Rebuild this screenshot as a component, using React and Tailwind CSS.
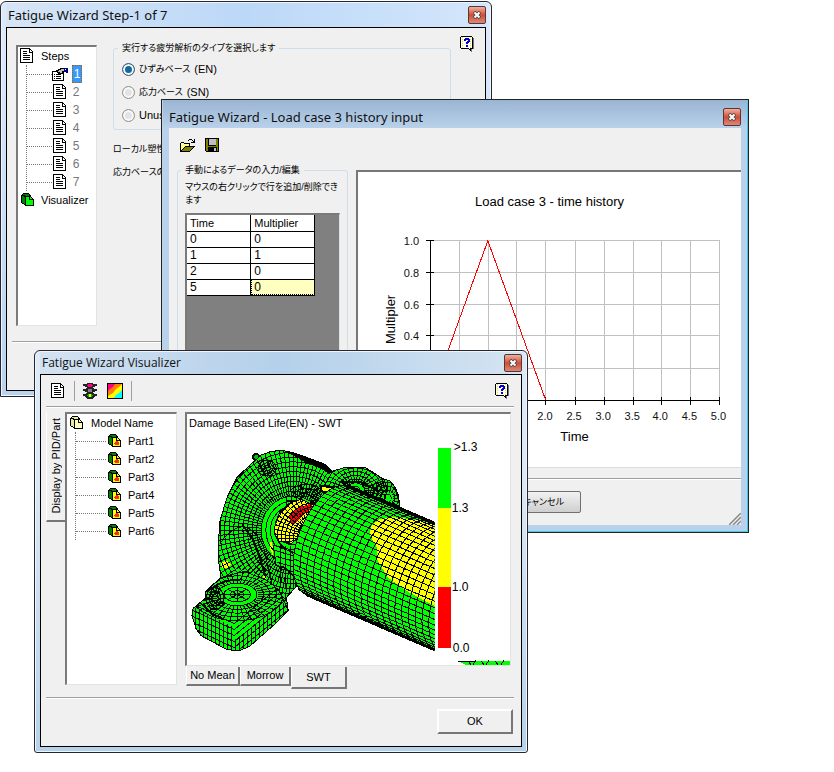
import { useState } from "react";

const UI_FONT = "font-['Liberation_Sans','Noto_Sans_CJK_JP',sans-serif]";
const JP_TEXT =
  "font-['Liberation_Sans','Noto_Sans_CJK_JP',sans-serif] text-[9px] [font-feature-settings:'palt']";

/* ---------- icons ---------- */

function DocIcon() {
  return (
    <svg width="15" height="16" viewBox="0 0 15 16" shapeRendering="crispEdges" className="shrink-0">
      <path d="M1 0h10v1h1v1h1v1h1v12H1z" fill="#000" />
      <path d="M2 1h8v4h3v9H2z" fill="#fff" />
      <path d="M11 2h1v1h1v1h-2z" fill="#fff" />
      <path d="M4 3h4v1H4zM4 5h4v1H4zM4 7h7v1H4zM4 9h7v1H4zM4 11h7v1H4z" fill="#000" />
    </svg>
  );
}

function EditIcon() {
  return (
    <svg width="16" height="16" viewBox="0 0 16 16" shapeRendering="crispEdges" className="shrink-0">
      <path d="M0 5h12v10H0z" fill="#000" />
      <path d="M1 6h10v8H1z" fill="#fff" />
      <path d="M2 8h1v1H2zM4 8h5v1H4zM2 10h1v1H2zM4 10h5v1H4zM2 12h1v1H2zM4 12h5v1H4z" fill="#000" />
      <path d="M4 4h2V3h2V2h5v4h-2v2H9v1H7V8H6V7H5V6H4z" fill="#000" />
      <path d="M5 5h2V4h2V3h4v2h-3v2H8V6H6z" fill="#c0c0c0" />
      <path d="M12 2h4v5h-2V6h-2z" fill="#000080" />
      <path d="M13 3h1v1h-1z" fill="#fff" />
    </svg>
  );
}

function BlockIcon({ side, face, spot }) {
  return (
    <svg width="14" height="14" viewBox="0 0 14 14" shapeRendering="crispEdges" className="shrink-0">
      <path d="M0 2h1V1h1V0h6v1h1v1h1v2h1v1h1v1h1v7H4v-1H3v-1H1v-1H0z" fill="#000" />
      <path d="M1 3h2v1h1v7H3v-1H1zM2 1h6v2H4V2H2z" fill={side} />
      <path d="M5 4h3v3h4v5H5zM9 4h1v1h1v1H9z" fill={face} />
      {spot && <path d="M6 9h1V8h1V7h2v1h1v3H7v-1H6z" fill={spot} />}
    </svg>
  );
}

function HelpIcon() {
  return (
    <svg width="15" height="16" viewBox="0 0 15 16" shapeRendering="crispEdges" className="shrink-0">
      <path d="M2 1h11v1h1v11h-2v3h-1v-1h-1v-1H9v-1H2z" fill="#777" />
      <path d="M1 0h11v1h1v12h-2v2h-1v-1H9v-1H1v-1H0V1h1z" fill="#000" />
      <path d="M1 1h11v11h-2v1H9v-1H1z" fill="#fff" />
      <path d="M2.500 1v11M10.500 1v11" stroke="#f5e800" strokeDasharray="1 1" />
      <path d="M5 2h4v1h1v3H9v1H8v1H6V6h1V5h1V4H6v1H4V3h1zM6 9h2v2H6z" fill="#0000d0" />
    </svg>
  );
}

function FolderIcon() {
  return (
    <svg width="17" height="15" viewBox="0 0 17 15" shapeRendering="crispEdges">
      <path d="M1 5h1V4h3v1h6v3h5v1h-1v1h-1v1h-1v1h-1v1h-1v1H1z" fill="#000" />
      <path d="M2 5h3v1h5v2H6v1H5v1H4v1H3v1H2z" fill="#ffff8c" />
      <path d="M6 9h8v1h-1v1h-1v1h-1v1H3v-1h1v-1h1v-1h1z" fill="#808000" />
      <path d="M9 2h1V1h3v1h1v1h1V1h1v4h-4V4h2V3h-1V2h-3v1H9z" fill="#000" />
    </svg>
  );
}

function DiskIcon() {
  return (
    <svg width="15" height="15" viewBox="0 0 15 15" shapeRendering="crispEdges">
      <path d="M0 0h14v14H1v-1H0z" fill="#000" />
      <path d="M1 1h2v7h8V1h2v12H1z" fill="#808000" />
      <path d="M4 1h7v6H4z" fill="#c0c0c0" />
      <path d="M3 9h9v4H3z" fill="#000" />
      <path d="M9 10h2v3H9z" fill="#c0c0c0" />
    </svg>
  );
}

function TrafficIcon() {
  return (
    <svg width="16" height="16" viewBox="0 0 16 16" shapeRendering="crispEdges">
      <path d="M5 0h6v1h1v3h-1v1h1v4h-1v1h1v5h-1v1H5v-1H4v-5h1V9H4V5h1V4H4V1h1z" fill="#222" />
      <path d="M1 1h3v2h1v1H3V3H1zM15 1h-3v2h-1v1h2V3h2zM1 6h3v2h1v1H3V8H1zM15 6h-3v2h-1v1h2V8h2zM1 11h3v2h1v1H3v-1H1zM15 11h-3v2h-1v1h2v-1h2z" fill="#222" />
      <path d="M6 1h4v1h1v1h-1v1H6V3H5V2h1z" fill="#ff0080" />
      <path d="M6 6h4v3H6z" fill="#808080" />
      <path d="M6 11h4v1h1v1h-1v1H6v-1H5v-1h1z" fill="#00c000" />
      <path d="M7 11h2v3H7z" fill="#ff0" />
    </svg>
  );
}

function ContourIcon() {
  return (
    <svg width="16" height="16" viewBox="0 0 16 16">
      <path d="M0 0h16v16H0z" fill="#000" />
      <path d="M1 1h14v14H1z" fill="#ff0" />
      <path d="M1 1h14L12 4 9 6 6 10 1 13z" fill="#ff8000" />
      <path d="M1 1h7L6 4 3 6 1 8z" fill="#ff0080" />
      <path d="M15 7v8H7l2-3 3-2z" fill="#0ff" />
    </svg>
  );
}

/* ---------- window parts ---------- */

function CloseButton() {
  return (
    <button
      type="button"
      aria-label="Close"
      className="flex h-[18px] w-[18px] shrink-0 items-center justify-center rounded-[2px] border border-[#5c3434] bg-linear-to-b from-[#eeb0a0] via-[#cf4b33] to-[#d88878]"
    >
      <svg width="8" height="8" viewBox="0 0 8 8">
        <path d="M1 1l6 6M7 1L1 7" stroke="#444" strokeWidth="3.500" />
        <path d="M1.500 1.500l5 5M6.500 1.500l-5 5" stroke="#fff" strokeWidth="2" />
      </svg>
    </button>
  );
}

function TitleBar({ title, className }) {
  return (
    <div className={`flex items-center justify-between ${className}`}>
      <h2 className="whitespace-nowrap text-[#111]">{title}</h2>
      <CloseButton />
    </div>
  );
}

function Rule({ className = "" }) {
  return <div className={`h-[2px] border-t border-[#a0a0a0] border-b border-b-white ${className}`} />;
}

const SUNKEN = "border-t-2 border-l-2 border-t-[#7a7a7a] border-l-[#7a7a7a] border-r border-b border-r-[#e3e3e3] border-b-[#e3e3e3]";

/* ---------- step window ---------- */

function StepTree({ current, setCurrent }) {
  return (
    <div className={`min-h-[281px] w-[81px] bg-white ${SUNKEN}`}>
      <div className="flex h-[18px] items-center gap-[7px] pl-px">
        <DocIcon />
        <span>Steps</span>
      </div>
      <ul className="ml-2 border-l border-dotted border-[#777]">
        {[1, 2, 3, 4, 5, 6, 7].map((n) => (
          <li key={n} className={`flex h-[18px] items-center ${n === 7 ? "-mb-2" : ""}`}>
            <span className="w-[25px] border-t border-dotted border-[#777]" />
            {n === 1 ? <EditIcon /> : <DocIcon />}
            <button
              type="button"
              onClick={() => setCurrent(n)}
              className={`ml-1 h-[18px] w-[10px] text-[12px] leading-4 ${
                n === current
                  ? "border border-dotted border-[#b06000] bg-[#3399ff] text-white"
                  : "text-[#777]"
              }`}
            >
              {n}
            </button>
          </li>
        ))}
      </ul>
      <div className="mt-2 flex h-[18px] items-center gap-[6px] pl-[3px]">
        <BlockIcon side="#008000" face="#00ff00" />
        <span>Visualizer</span>
      </div>
    </div>
  );
}

function StepWindow() {
  const [current, setCurrent] = useState(1);
  const [type, setType] = useState("en");
  const types = [
    { id: "en", label: "ひずみベース", suffix: "(EN)" },
    { id: "sn", label: "応力ベース", suffix: "(SN)" },
    { id: "un", label: "", suffix: "Unus" },
  ];

  return (
    <section className="absolute top-px left-0 w-[492px] rounded-t-md border border-[#26262e] bg-linear-to-b from-[#dbe9fb] from-10% to-[#b9d3ef] px-[5px] pt-px pb-[5px] shadow-[inset_0_0_0_1px_#eef5fc]">
      <TitleBar
        title="Fatigue Wizard Step-1 of 7"
        className="h-[24px] bg-linear-to-r from-[#d6e5f6] via-[#bcd8f8] to-[#d3e6fb] pl-[2px] font-['Noto_Sans',sans-serif] text-[13px]"
      />
      <div className="min-h-[364px] border border-black bg-[#f0f0f0]">
        <div className="flex pt-[17px] pl-[9px]">
          <StepTree current={current} setCurrent={setCurrent} />
          <div className="-mt-1 ml-4 w-[338px]">
            <fieldset className="min-w-0 rounded-[3px] border border-[#d0dde8] px-2 pb-1">
              <legend className={`-ml-1 px-1 leading-[14px] ${JP_TEXT}`}>
                実行する疲労解析のタイプを選択します
              </legend>
              <div className="flex flex-col gap-[9px] pt-[7px] pb-[3px]">
                {types.map((t) => (
                  <label key={t.id} className={`flex h-[14px] items-center gap-1 whitespace-nowrap ${JP_TEXT}`}>
                    <input
                      type="radio"
                      name="type"
                      checked={type === t.id}
                      onChange={() => setType(t.id)}
                      className="h-[13px] w-[13px] appearance-none rounded-full border border-[#8e8f8f] bg-[#e4e4e4] shadow-[inset_0_0_0_2px_#f8f8f8] checked:border-[#4a6078] checked:bg-[#14689c]"
                    />
                    {t.label && <span>{t.label}</span>}
                    <span className="text-[11px]">{t.suffix}</span>
                  </label>
                ))}
              </div>
            </fieldset>
            <div className={`flex flex-col gap-[9px] pt-[12px] leading-[14px] ${JP_TEXT}`}>
              <p>ローカル塑性</p>
              <p>応力ベースの</p>
            </div>
          </div>
          <button type="button" aria-label="Help" className="-mt-[9px] ml-[9px] h-4">
            <HelpIcon />
          </button>
        </div>
        <Rule className="mt-[15px] ml-[5px] mr-1" />
      </div>
    </section>
  );
}

/* ---------- history window ---------- */

function HistoryChart() {
  const xs = Array.from({ length: 11 }, (_, i) => Math.round(431 + i * 28.8) + 0.5);
  const ys = Array.from({ length: 6 }, (_, i) => Math.round(399 - i * 31.8) + 0.5);
  return (
    <svg viewBox="359 172 382 294" className="block w-full" fontFamily="Liberation Sans, Arial, sans-serif">
      <g stroke="#c0c0c0" shapeRendering="crispEdges">
        {xs.map((x) => <path key={x} d={`M${x} 240V399`} />)}
        {ys.map((y) => <path key={y} d={`M431 ${y}H719`} />)}
      </g>
      <path d="M431.500 240V400M431 399.500H720" stroke="#000" shapeRendering="crispEdges" />
      <g stroke="#000" shapeRendering="crispEdges">
        {xs.map((x) => <path key={x} d={`M${x} 396V404`} />)}
        {ys.map((y) => <path key={y} d={`M427 ${y}H435`} />)}
      </g>
      <path d="M431 399L488.500 240.500L546 399" fill="none" stroke="#f00" shapeRendering="crispEdges" />
      <g fontSize="11" fill="#111">
        {ys.map((y, i) => (
          <text key={y} x="420" y={y + 4} textAnchor="end">{(i * 0.2).toFixed(1)}</text>
        ))}
        {xs.map((x, i) => (
          <text key={x} x={x - 1} y="419" textAnchor="middle">{(i * 0.5).toFixed(1)}</text>
        ))}
      </g>
      <g fontSize="13" fill="#000" textAnchor="middle">
        <text x="550" y="206">Load case 3 - time history</text>
        <text x="575" y="440">Time</text>
        <text transform="translate(396 319) rotate(-90)">Multipler</text>
      </g>
    </svg>
  );
}

function HistoryWindow() {
  const rows = [
    [0, 0],
    [1, 1],
    [2, 0],
    [5, 0],
  ];
  return (
    <section className="absolute top-[99px] left-[161px] w-[588px] border border-[#222] bg-[#b9d1ea] px-[7px] pb-[7px] shadow-[inset_-1px_-1px_0_#44c8e8]">
      <TitleBar
        title="Fatigue Wizard - Load case 3 history input"
        className="-mx-[6px] h-[28px] bg-linear-to-b from-[#9ab5d3] to-[#b9d1ea] px-[6px] pt-[5px] font-['Noto_Sans',sans-serif] text-[13px]"
      />
      <div className="flex flex-col bg-[#f0f0f0]">
        <div className="flex h-[35px] items-center gap-[9px] pl-[10px]">
          <button type="button" aria-label="Open"><FolderIcon /></button>
          <button type="button" aria-label="Save"><DiskIcon /></button>
        </div>
        <div className="flex">
          <fieldset className="ml-2 w-[171px] min-w-0 shrink-0 rounded-[3px] border border-[#d0dde8] px-[7px]">
            <legend className={`-ml-1 px-1 leading-[14px] ${JP_TEXT}`}>手動によるデータの入力/編集</legend>
            <p className={`pt-1 whitespace-nowrap leading-[13px] ${JP_TEXT}`}>
              マウスの右クリックで行を追加/削除でき
              <br />
              ます
            </p>
            <div className={`mt-[6px] min-h-[240px] bg-[#808080] ${SUNKEN}`}>
              <table className="w-[128px] table-fixed border-collapse bg-white text-left">
                <thead>
                  <tr>
                    <th className="h-4 border-r border-b border-black pl-[3px] font-normal leading-[14px]">Time</th>
                    <th className="h-4 border-r border-b border-black pl-[3px] font-normal leading-[14px]">Multiplier</th>
                  </tr>
                </thead>
                <tbody>
                  {rows.map(([time, mult]) => (
                    <tr key={time} className="text-[12px]">
                      <td className="h-4 border-r border-b border-black pl-[3px] leading-[14px]">{time}</td>
                      <td
                        className={`h-4 border-r border-b border-black pl-[3px] leading-[14px] ${
                          time === 5 ? "bg-[#ffffc0] outline-1 -outline-offset-1 outline-dotted outline-black" : ""
                        }`}
                      >
                        {mult}
                      </td>
                    </tr>
                  ))}
                </tbody>
              </table>
            </div>
          </fieldset>
          <div className="ml-2 flex-1 pt-[7px]">
            <div className="border-t-2 border-l-2 border-b border-t-[#777] border-l-[#777] border-b-[#ddd] bg-white">
              <HistoryChart />
            </div>
          </div>
        </div>
        <Rule className="mt-[10px]" />
        <div className="flex items-end justify-between pt-[11px] pl-[320px]">
          <button
            type="button"
            className={`mb-3 h-[22px] w-[92px] rounded-[2px] border border-[#707070] bg-linear-to-b from-[#f2f2f2] to-[#cfcfcf] pr-4 text-right ${JP_TEXT}`}
          >
            キャンセル
          </button>
          <svg width="12" height="12" viewBox="0 0 12 12">
            <path d="M0 12L12 0M4 12L12 4M8 12L12 8" stroke="#888" strokeWidth="1.500" />
          </svg>
        </div>
      </div>
    </section>
  );
}

/* ---------- visualizer ---------- */

const HOUSING =
  "M254 462L262 455L270 452L282 450L295 453L312 459L325 464L333 471L340 469L347 467L365 467L373 472L382 478L391 481L396 488L399 496L400 506L345 540L300 590L298 585L287 597L289 610L275 624L250 646L240 650L228 649L202 635L197 628L193 615L194 608L206 598L206 592L215 583L222 578L220 565L219 545L221 520L228 497L238 477Z";
const FOOT = "M222 577L245 571L268 580L280 590L289 610L275 624L250 646L240 650L228 649L202 635L197 628L193 615L194 608L206 598L206 592Z";
const LOBE = "M325 486L333 471L347 467L365 467L373 472L382 478L391 481L396 488L400 506L360 492Z";
const SEAT = "M276 523L280 513L290 503L302 499L316 506L314 516L303 534L292 543L280 541L275 533Z";

// ellipse rings with spokes, used for every round part of the housing
function ringMesh(cx, cy, rx, ry, rings, spokes, inner = 0.3) {
  let d = "";
  for (let i = 1; i <= rings; i++) {
    const a = (rx * i) / rings;
    const b = (ry * i) / rings;
    d += `M${cx - a} ${cy}a${a} ${b} 0 1 0 ${2 * a} 0a${a} ${b} 0 1 0 ${-2 * a} 0`;
  }
  for (let i = 0; i < spokes; i++) {
    const t = (i * 2 * Math.PI) / spokes;
    d += `M${cx + rx * inner * Math.cos(t)} ${cy + ry * inner * Math.sin(t)}L${cx + rx * Math.cos(t)} ${cy + ry * Math.sin(t)}`;
  }
  return d;
}

function shaftPoint(t, k = 0) {
  const x = 328 + 21 * Math.cos(t) - 27 * Math.sin(t) + k * 130;
  const y = 540 - 54 * Math.cos(t) - 10 * Math.sin(t) + k * 56;
  return `${x.toFixed(1)} ${y.toFixed(1)}`;
}

function shaftArc(k) {
  const pts = Array.from({ length: 25 }, (_, i) => shaftPoint((i * Math.PI) / 24, k));
  return `M${pts.join("L")}`;
}

const shaftOutline = `${shaftArc(0)}L${shaftPoint(Math.PI, 1.2)}L${shaftPoint(0, 1.2)}Z`;
const shaftLines =
  Array.from({ length: 24 }, (_, i) => shaftArc(i * 0.052)).join("") +
  Array.from({ length: 31 }, (_, i) => `M${shaftPoint((i * Math.PI) / 30)}L${shaftPoint((i * Math.PI) / 30, 1.2)}`).join("");

function ModelView() {
  const bands = [
    { y: 448, h: 60, fill: "#00ff00", label: ">1.3", ly: 451, lx: 454 },
    { y: 508, h: 79, fill: "#ffff00", label: "1.3", ly: 512, lx: 452 },
    { y: 587, h: 60, fill: "#ff0000", label: "1.0", ly: 591, lx: 452 },
  ];
  return (
    <svg
      viewBox="188 432 322 232"
      className="block w-full"
      fontFamily="Liberation Sans, Arial, sans-serif"
      fontSize="12"
      role="img"
      aria-label="Damage contour on the model"
    >
      <defs>
        <clipPath id="housing"><path d={HOUSING} /></clipPath>
        <clipPath id="foot"><path d={FOOT} /></clipPath>
        <clipPath id="lobe"><path d={LOBE} /></clipPath>
        <clipPath id="seat"><path d={SEAT} /></clipPath>
        <clipPath id="shaft"><path d={shaftOutline} /></clipPath>
        <clipPath id="view"><path d="M188 432H435V664H188z" /></clipPath>
      </defs>
      <g stroke="#000" fill="none" shapeRendering="crispEdges">
        <circle cx="257" cy="457" r="3" fill="#0b0" strokeWidth="2" />
        <path d={HOUSING} fill="#00ff00" />
        <g clipPath="url(#housing)">
          <path d="M222 562l6-2 4 4-4 4-6-1zM263 575l3 1 3 11-3-3zM271 542l2 0 1 14-3-7z" fill="#ff0" stroke="none" />
          <path d={ringMesh(294, 530, 105, 112, 23, 100)} />
          <path d="M283 449L300 453L325 464L345 477L350 485L330 472L305 461Z" fill="#000" />
          <path d={ringMesh(268, 468, 9, 8, 3, 12)} />
          <path d="M221 543q10-15 23-17 12 3 20 19l10 45" />
          <path d="M243 524l10 14 8 20 5 17" strokeWidth="2" />
          <path d={ringMesh(307, 500, 20, 16, 4, 20)} />
          <path d="M284 547l12 8 2 25-12-13-9-2-3-20z" fill="#00ff00" />
          <path d="M275 545l22 8M276 550l22 7M277 556l22 6M278 562l22 6M280 568l20 5M281 545v42M286 546v42M291 546v42M296 546v42" />
        </g>
        <path d={FOOT} fill="#00ff00" />
        <g clipPath="url(#foot)">
          <path d={ringMesh(238, 594, 46, 26, 7, 40, 0.45)} />
          <path d={Array.from({ length: 8 }, (_, i) => `M190 ${602 + i * 6}l45 21 58-47`).join("")} />
          <path d={Array.from({ length: 24 }, (_, i) => `M${192 + i * 4} ${i < 11 ? 605 + i * 2 : 638 - (i - 11) * 3}v32`).join("")} />
          <path d="M238 587v14M224 594h28M229 589l18 10M247 589l-18 10" />
          <path d={ringMesh(216, 598, 9, 11, 3, 14)} />
          <path d="M204 603q4 6 9 11l9 3M214 587q10-8 28-8" strokeWidth="2" />
        </g>
        <path d={LOBE} fill="#00ff00" />
        <g clipPath="url(#lobe)">
          <path d={ringMesh(356, 490, 31, 26, 7, 34)} />
          <path d={ringMesh(388, 498, 18, 20, 5, 20)} />
          <path d="M340 482l22 0 18 10" strokeWidth="2" />
        </g>
        <path d="M322 486l14 1-6 6-8-2z" fill="#ff0" strokeWidth="2" />
        <path d={SEAT} fill="#ffff00" />
        <path d="M290 516L299 507L310 504L314 506L304 515L295 524L291 523Z" fill="#f00" stroke="none" />
        <g clipPath="url(#seat)">
          <path d={ringMesh(318, 538, 48, 48, 12, 60)} />
        </g>
        <g clipPath="url(#view)">
          <path d={shaftOutline} fill="#00ff00" />
          <g clipPath="url(#shaft)">
            <path
              d="M436 524L412 519L394 517L380 519L372 525L370 534L377 547L378 560L388 577L408 591L424 600L436 606Z"
              fill="#ffff00"
              stroke="none"
            />
            <path d={shaftLines} />
          </g>
          <path d={`M${shaftPoint(0)}L${shaftPoint(0, 1)}M${shaftPoint(Math.PI)}L${shaftPoint(Math.PI, 1)}`} strokeWidth="3" />
        </g>
        <path d="M458 660H510V664H466Z" fill="#00ff00" stroke="none" />
        <path d="M458 660.500H476M468 660l3 4M476 660l-3 4M481 660l3 4M489 660l-3 4M495 660l3 4M504 660l-3 4" />
      </g>
      {bands.map((b) => (
        <g key={b.label}>
          <rect x="438" y={b.y} width="13" height={b.h} fill={b.fill} shapeRendering="crispEdges" />
          <text x={b.lx} y={b.ly}>{b.label}</text>
        </g>
      ))}
      <text x="453" y="651">0.0</text>
    </svg>
  );
}

function PartTree() {
  return (
    <div className={`mb-1 w-[112px] shrink-0 bg-white ${SUNKEN}`}>
      <div className="flex h-[18px] items-center gap-[7px] pl-[3px]">
        <BlockIcon side="#ece9a0" face="#ffffc0" />
        <span>Model Name</span>
      </div>
      <ul className="ml-2 border-l border-dotted border-[#777]">
        {[1, 2, 3, 4, 5, 6].map((n) => (
          <li key={n} className={`flex h-[18px] items-center ${n === 6 ? "-mb-2" : ""}`}>
            <span className="mr-[2px] w-[30px] border-t border-dotted border-[#777]" />
            <BlockIcon side="#008000" face="#ffff00" spot="#f03020" />
            <span className="ml-[6px]">Part{n}</span>
          </li>
        ))}
      </ul>
    </div>
  );
}

function VisualizerWindow() {
  const tab = "border-r-2 border-b-2 border-l border-r-[#777] border-b-[#777] border-l-white bg-[#f0f0f0]";
  return (
    <section className="absolute top-[350px] left-[34px] w-[494px] rounded-t-md rounded-b-[3px] border border-[#26262e] bg-linear-to-b from-[#dce9f6] from-30% to-[#b5d2ea] px-[5px] pt-px pb-[5px] shadow-[inset_0_0_0_1px_#eef5fc]">
      <TitleBar
        title="Fatigue Wizard Visualizer"
        className="h-[22px] bg-linear-to-r from-[#d3e2f1] via-[#b4d0ea] to-[#d4e4f2] pl-[2px] font-['Open_Sans',sans-serif] text-[12px]"
      />
      <div className="border border-black bg-[#f0f0f0] pr-[7px] pl-[5px]">
        <div className="flex h-[31px] items-center pr-1 pl-1">
          <button type="button" aria-label="Report"><DocIcon /></button>
          <span className="ml-[9px] h-5 border-l border-[#a0a0a0]" />
          <button type="button" aria-label="Run" className="ml-[7px]"><TrafficIcon /></button>
          <button type="button" aria-label="Contour" className="ml-[9px]"><ContourIcon /></button>
          <span className="ml-2 h-5 border-l border-[#a0a0a0]" />
          <button type="button" aria-label="Help" className="ml-auto"><HelpIcon /></button>
        </div>
        <Rule />
        <div className="mt-1 mr-[3px] flex">
          <button
            type="button"
            className="flex h-[110px] w-[19px] shrink-0 items-center justify-center border-b-2 border-l border-b-[#777] border-l-white whitespace-nowrap"
          >
            <span className="rotate-180 [writing-mode:vertical-rl]">Display by PID/Part</span>
          </button>
          <PartTree />
          <div className="ml-2 flex-1">
            <div className={`bg-white ${SUNKEN}`}>
              <p className="h-[18px] pl-[2px] leading-[18px]">Damage Based Life(EN) - SWT</p>
              <ModelView />
            </div>
            <div className="flex items-start pt-px pl-px">
              <button type="button" className={`h-[19px] w-[54px] leading-[17px] ${tab}`}>No Mean</button>
              <button type="button" className={`h-[19px] w-[51px] leading-[17px] ${tab}`}>Morrow</button>
              <button type="button" className={`h-[22px] w-[56px] leading-[20px] ${tab}`}>SWT</button>
            </div>
          </div>
        </div>
        <Rule className="mt-[8px]" />
        <div className="flex justify-end pt-[10px] pr-px pb-[12px]">
          <button
            type="button"
            className="h-[25px] w-[76px] border-2 border-t-white border-r-[#777] border-b-[#777] border-l-white"
          >
            OK
          </button>
        </div>
      </div>
    </section>
  );
}

export default function App() {
  return (
    <main className={`relative min-h-screen w-full overflow-hidden bg-white text-[11px] leading-4 text-black ${UI_FONT}`}>
      <StepWindow />
      <HistoryWindow />
      <VisualizerWindow />
    </main>
  );
}
